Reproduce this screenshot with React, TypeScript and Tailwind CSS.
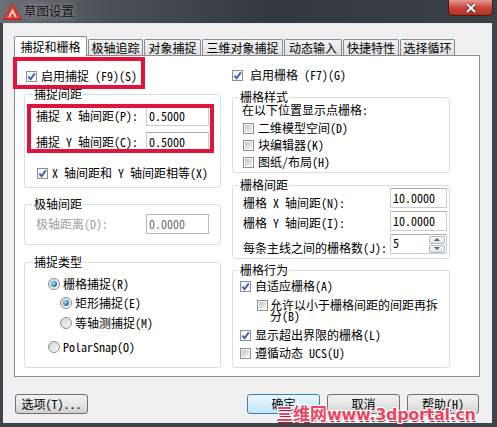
import React from "react";

// 草图设置 dialog, Win7 look

function Check({ on }: { on?: boolean }) {
  return (
    <span className="w-[11px] h-[11px] shrink-0 border border-[#8e8f8f] bg-gradient-to-br from-[#f0f0f0] to-white flex items-center justify-center">
      {on ? (
        <svg viewBox="0 0 9 9" className="w-[9px] h-[9px]">
          <path d="M1.3 4.6 L3.6 7.2 L7.8 1.4" stroke="#3f5da8" strokeWidth="1.9" fill="none" />
        </svg>
      ) : (
        <span className="w-[7px] h-[7px] bg-gradient-to-br from-[#c8c8c8] to-[#f2f2f2]" />
      )}
    </span>
  );
}

function Radio({ on }: { on?: boolean }) {
  return (
    <span className="w-[12px] h-[12px] shrink-0 rounded-full border border-[#8e8f8f] bg-gradient-to-br from-[#d2d2d2] to-[#fbfbfb] flex items-center justify-center">
      {on && (
        <span className="w-[6px] h-[6px] rounded-full bg-[radial-gradient(circle_at_35%_35%,#a8e4ff,#1f84c4_60%,#0b4d84)]" />
      )}
    </span>
  );
}

function Box({ value, className }: { value: string; className: string }) {
  return (
    <div
      className={
        "h-[20px] shrink-0 flex items-center pl-[2px] bg-white border border-[#c9ced6] border-t-[#abadb3] " +
        className
      }
    >
      {value}
    </div>
  );
}

function Group({ title, className, children }: { title: string; className: string; children: React.ReactNode }) {
  return (
    <fieldset className={"border border-[#d5dfe5] rounded-[3px] " + className}>
      <legend className="px-[1px] leading-[12px]">{title}</legend>
      {children}
    </fieldset>
  );
}

const TABS = [
  { label: "捕捉和栅格", w: "w-[73px]", on: true },
  { label: "极轴追踪", w: "w-[55px]" },
  { label: "对象捕捉", w: "w-[57px]" },
  { label: "三维对象捕捉", w: "w-[81px]" },
  { label: "动态输入", w: "w-[58px]" },
  { label: "快捷特性", w: "w-[56px]" },
  { label: "选择循环", w: "w-[55px]" },
];

function Btn({ label, className, focus }: { label: string; className: string; focus?: boolean }) {
  return (
    <div
      className={
        "h-[20px] flex items-center justify-center rounded-[3px] border " +
        (focus
          ? "border-[#3c7fb1] bg-gradient-to-b from-[#eaf6fd] via-[#d9f0fc] to-[#bee6fd] "
          : "border-[#707070] bg-gradient-to-b from-[#f2f2f2] via-[#e6e6e6] to-[#d0d0d0] ") +
        className
      }
    >
      {label}
    </div>
  );
}

export default function App() {
  return (
    <div className="relative w-[497px] h-[427px] overflow-hidden bg-[#3f444b] font-['Noto_Sans_CJK_SC',sans-serif] text-[12px] leading-[14px] text-black [font-feature-settings:'hwid']">
      {/* title bar */}
      <div className="h-[23px] flex items-start bg-[linear-gradient(to_right,#6c7076_0%,#4b5057_22%,#33383e_55%,#3b4148_100%)]">
        <svg viewBox="0 0 20 18" className="w-[19px] h-[17px] ml-[3px] mt-[3px]">
          <polygon points="10,0 20,18 0,18" fill="#c9231e" />
          <polygon points="10,2 18,16.5 2,16.5" fill="#e0443a" />
          <polygon points="10,6 14.5,15 12.5,15 10,10 7.5,15 5.5,15" fill="#fbe2dc" />
        </svg>
        <div className="ml-[2px] mt-[3px] text-[12.5px] leading-[16px] text-[#111] [text-shadow:0_0_6px_rgba(230,230,230,0.7)]">
          草图设置
        </div>
        <div className="ml-auto mr-[4px] w-[45px] h-[17px] -mt-[1px] rounded-b-[4px] border border-[#4c1711] bg-gradient-to-b from-[#e29a90] via-[#c9473a] to-[#b0301f] flex items-center justify-center">
          <svg viewBox="0 0 12 10" className="w-[12px] h-[10px]">
            <path d="M2 1 L10 9 M10 1 L2 9" stroke="#5a1a12" strokeWidth="3.6" />
            <path d="M2 1 L10 9 M10 1 L2 9" stroke="#fff" strokeWidth="2.2" />
          </svg>
        </div>
      </div>

      {/* client */}
      <div className="ml-[3px] w-[489px] h-[400px] bg-[#f0f0f0] border-t border-[#e4e7ea] flex flex-col">
        {/* tabs */}
        <div className="mt-[12px] ml-[11px] h-[19px] flex items-end gap-[1px]">
          {TABS.map((t) =>
            t.on ? (
              <div
                key={t.label}
                className={"relative z-10 -mb-[1px] h-[20px] flex items-center justify-center bg-white border border-b-0 border-[#898c95] rounded-t-[2px] " + t.w}
              >
                {t.label}
              </div>
            ) : (
              <div
                key={t.label}
                className={"h-[16px] pt-[1px] flex items-center justify-center border border-b-0 border-[#898c95] rounded-t-[2px] bg-gradient-to-b from-[#f2f2f2] to-[#e1e1e1] " + t.w}
              >
                {t.label}
              </div>
            )
          )}
        </div>

        {/* page */}
        <div className="ml-[11px] w-[466px] h-[322px] border border-[#898c95] bg-white flex pl-[9px]">
          {/* left column */}
          <div className="w-[197px] pt-[12px] flex flex-col">
            <div className="h-[16px] flex items-center ml-[2px]">
              <Check on />
              <span className="ml-[4px]">启用捕捉 (F9)(S)</span>
            </div>

            <Group title="捕捉间距" className="mt-[4px] pl-[8px] pb-[6px]">
              <div className="mt-[6px] h-[20px] flex items-center">
                <span className="ml-[3px] w-[110px]">捕捉 X 轴间距(P):</span>
                <Box value="0.5000" className="w-[63px]" />
              </div>
              <div className="mt-[6px] h-[20px] flex items-center">
                <span className="ml-[3px] w-[110px]">捕捉 Y 轴间距(C):</span>
                <Box value="0.5000" className="w-[63px]" />
              </div>
              <div className="mt-[13px] h-[16px] flex items-center ml-[4px]">
                <Check on />
                <span className="ml-[4px]">X 轴间距和 Y 轴间距相等(X)</span>
              </div>
            </Group>

            <Group title="极轴间距" className="mt-[10px] pl-[8px] pb-[10px]">
              <div className="mt-[4px] h-[20px] flex items-center">
                <span className="ml-[3px] w-[110px] text-[#a0a0a0]">极轴距离(D):</span>
                <div className="w-[63px] h-[20px] flex items-center pl-[2px] border border-[#b8b8b8] bg-white text-[#6d6d6d]">
                  0.0000
                </div>
              </div>
            </Group>

            <Group title="捕捉类型" className="mt-[11px] pl-[8px] pb-[12px]">
              <div className="mt-[8px] h-[16px] flex items-center ml-[15px]">
                <Radio on />
                <span className="ml-[3px]">栅格捕捉(R)</span>
              </div>
              <div className="mt-[3px] h-[16px] flex items-center ml-[27px]">
                <Radio on />
                <span className="ml-[3px]">矩形捕捉(E)</span>
              </div>
              <div className="mt-[4px] h-[16px] flex items-center ml-[27px]">
                <Radio />
                <span className="ml-[3px]">等轴测捕捉(M)</span>
              </div>
              <div className="mt-[8px] h-[16px] flex items-center ml-[15px]">
                <Radio />
                <span className="ml-[3px]">PolarSnap(O)</span>
              </div>
            </Group>
          </div>

          {/* right column */}
          <div className="ml-[11px] w-[218px] pt-[11px] flex flex-col">
            <div className="h-[16px] flex items-center">
              <Check on />
              <span className="ml-[7px]">启用栅格 (F7)(G)</span>
            </div>

            <Group title="栅格样式" className="mt-[8px] pl-[6px] pb-[2px]">
              <div className="ml-[3px] h-[14px]">在以下位置显示点栅格:</div>
              <div className="mt-[3px] h-[16px] flex items-center ml-[4px]">
                <Check />
                <span className="ml-[4px]">二维模型空间(D)</span>
              </div>
              <div className="mt-[1px] h-[16px] flex items-center ml-[4px]">
                <Check />
                <span className="ml-[4px]">块编辑器(K)</span>
              </div>
              <div className="mt-[1px] h-[16px] flex items-center ml-[4px]">
                <Check />
                <span className="ml-[4px]">图纸/布局(H)</span>
              </div>
            </Group>

            <Group title="栅格间距" className="mt-[6px] pl-[6px] pb-[4px]">
              <div className="-mt-[3px] h-[20px] flex items-start">
                <span className="ml-[4px] mt-[8px]">栅格 X 轴间距(N):</span>
                <Box value="10.0000" className="ml-auto mr-[2px] w-[57px]" />
              </div>
              <div className="mt-[3px] h-[20px] flex items-start">
                <span className="ml-[4px] mt-[5px]">栅格 Y 轴间距(I):</span>
                <Box value="10.0000" className="ml-auto mr-[2px] w-[57px]" />
              </div>
              <div className="mt-[3px] h-[20px] flex items-start">
                <span className="ml-[4px] mt-[7px]">每条主线之间的栅格数(J):</span>
                <div className="ml-auto mr-[2px] w-[57px] h-[20px] flex items-center pl-[2px] bg-white border border-[#c9ced6] border-t-[#abadb3]">
                  <span className="-mt-[3px]">5</span>
                  <div className="ml-auto mr-[1px] flex flex-col gap-[1px]">
                    <span className="w-[16px] h-[8px] rounded-[2px] border border-[#b3b9c2] bg-gradient-to-b from-[#f6f6f6] to-[#dfe3e8] flex items-center justify-center">
                      <svg viewBox="0 0 6 3" className="w-[6px] h-[3px]">
                        <polygon points="3,0 6,3 0,3" fill="#4d6185" />
                      </svg>
                    </span>
                    <span className="w-[16px] h-[8px] rounded-[2px] border border-[#b3b9c2] bg-gradient-to-b from-[#f6f6f6] to-[#dfe3e8] flex items-center justify-center">
                      <svg viewBox="0 0 6 3" className="w-[6px] h-[3px]">
                        <polygon points="0,0 6,0 3,3" fill="#4d6185" />
                      </svg>
                    </span>
                  </div>
                </div>
              </div>
            </Group>

            <Group title="栅格行为" className="mt-[5px] pl-[6px] pb-[6px]">
              <div className="mt-[2px] h-[16px] flex items-center ml-[1px]">
                <Check on />
                <span className="ml-[4px]">自适应栅格(A)</span>
              </div>
              <div className="mt-[5px] flex items-start ml-[18px]">
                <span className="mt-[1px]">
                  <Check />
                </span>
                <span className="ml-[2px] w-[172px] leading-[11px]">允许以小于栅格间距的间距再拆分(B)</span>
              </div>
              <div className="mt-[6px] h-[16px] flex items-center ml-[1px]">
                <Check on />
                <span className="ml-[4px]">显示超出界限的栅格(L)</span>
              </div>
              <div className="mt-[2px] h-[16px] flex items-center ml-[1px]">
                <Check />
                <span className="ml-[4px]">遵循动态 UCS(U)</span>
              </div>
            </Group>
          </div>
        </div>

        {/* buttons */}
        <div className="mt-[17px] flex">
          <Btn label="选项(T)..." className="ml-[12px] w-[73px]" />
          <div className="ml-auto mr-[13px] flex gap-[7px]">
            <Btn label="确定" className="w-[73px]" focus />
            <Btn label="取消" className="w-[73px]" />
            <Btn label="帮助(H)" className="w-[72px]" />
          </div>
        </div>
      </div>

      {/* annotations */}
      <div className="absolute left-[13px] top-[57px] w-[132px] h-[32px] border-[4px] border-[#e3133b]" />
      <div className="absolute left-[27px] top-[104px] w-[187px] h-[49px] border-[4px] border-[#e3133b]" />

      {/* watermark */}
      <div className="absolute left-[276px] top-[404px] flex items-baseline text-[#ea4562] [text-shadow:1px_0_0_#fff,-1px_0_0_#fff,0_1px_0_#fff,0_-1px_0_#fff,1px_1px_0_#fff,-1px_-1px_0_#fff,1px_-1px_0_#fff,-1px_1px_0_#fff,1px_2px_0_#b01c36]">
        <span className="text-[17px] leading-[18px] font-bold">三维网</span>
        <span className="font-['DejaVu_Sans',sans-serif] font-bold text-[16px] leading-[18px] tracking-[-0.3px] [font-feature-settings:normal]">
          www.3dportal.cn
        </span>
      </div>
    </div>
  );
}
